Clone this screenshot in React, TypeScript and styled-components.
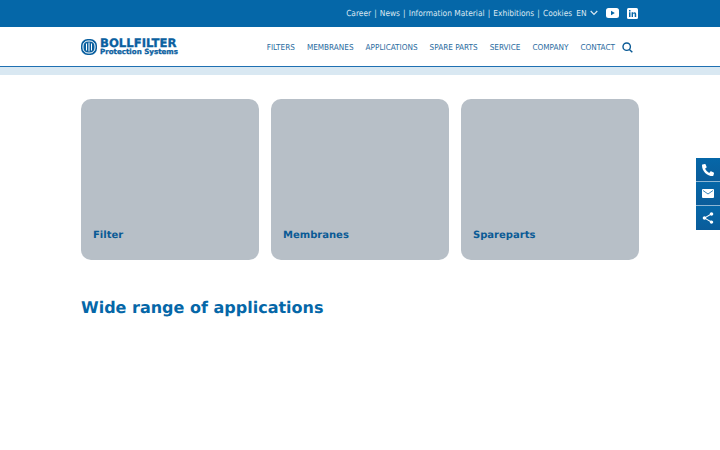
import React from 'react'
import styled, { createGlobalStyle } from 'styled-components'
import { FaPhoneAlt } from 'react-icons/fa'
import { MdShare } from 'react-icons/md'

const GlobalStyle = createGlobalStyle`
    html, body {
        margin: 0;
        padding: 0;
        background: #fff;
        font-family: "DejaVu Sans", sans-serif;
        text-rendering: geometricPrecision;
    }
`

const blue = '#0567a8'

const Page = styled.div`
    position: relative;
    width: 720px;
    height: 450px;
    overflow: hidden;
`

const TopBar = styled.div`
    height: 27px;
    padding-bottom: 1px;
    box-sizing: border-box;
    background: ${blue};
    display: flex;
    align-items: center;
    justify-content: flex-end;
    padding-right: 82px;
    color: #dbe8f2;
    font-family: "DejaVu Sans Condensed", "DejaVu Sans", sans-serif;
    font-stretch: condensed;
    font-size: 8.3px;
`

const TopLink = styled.span`
    white-space: nowrap;
`

const Sep = styled.span`
    margin: 0 3.1px;
`

const Lang = styled.span`
    display: flex;
    align-items: center;
    gap: 3.5px;
    margin-left: 4px;
    margin-right: 8px;
`

const Social = styled.svg`
    display: block;
    margin-left: 8px;
    &:first-of-type {
        margin-left: 0;
    }
`

const NavBar = styled.div`
    height: 39px;
    display: flex;
    align-items: center;
    justify-content: space-between;
    padding: 0 87px 0 81px;
    border-bottom: 1px solid #1f70b2;
`

const Logo = styled.div`
    display: flex;
    align-items: center;
    gap: 3px;
`

const LogoText = styled.div`
    display: flex;
    flex-direction: column;
    padding-top: 1px;
    color: #0a60a0;
    font-weight: 700;
    -webkit-text-stroke: 0.3px #0a60a0;
`

const LogoName = styled.span`
    font-size: 11.7px;
    line-height: 10px;
`

const LogoSub = styled.span`
    font-size: 7.1px;
    line-height: 8px;
`

const Nav = styled.nav`
    display: flex;
    align-items: center;
    padding-top: 1px;
    color: #2c6d9f;
    font-family: "DejaVu Sans Condensed", "DejaVu Sans", sans-serif;
    font-stretch: condensed;
    font-size: 8.13px;
    gap: 12px;
`

const NavLink = styled.span`
    white-space: nowrap;
`

const SearchIcon = styled.svg`
    display: block;
    margin-left: -5px;
`

const Strip = styled.div`
    height: 8px;
    background: #d9e8f2;
`

const Main = styled.main`
    padding: 24px 81px 0;
`

const Cards = styled.div`
    display: grid;
    grid-template-columns: repeat(3, 178px);
    gap: 12px;
`

const Card = styled.div`
    height: 161px;
    background: #b7bfc7;
    border-radius: 10px;
    display: flex;
    align-items: flex-end;
    padding: 0 12px 19.5px;
    box-sizing: border-box;
    color: #0a5a95;
    font-size: 10px;
    font-weight: 700;
`

const Heading = styled.h2`
    margin: 37px 0 0;
    color: ${blue};
    font-size: 16px;
    line-height: 22px;
    font-weight: 700;
`

const SideBar = styled.div`
    position: absolute;
    top: 158px;
    right: 0;
    display: flex;
    flex-direction: column;
`

const SideButton = styled.div`
    width: 24px;
    height: 24px;
    box-sizing: border-box;
    background: linear-gradient(#0567a8, #0a5c9a);
    border-bottom: 1px solid #8db6d4;
    color: #fff;
    display: flex;
    align-items: center;
    justify-content: center;
    &:last-child {
        border-bottom: 0;
    }
`

export default function App() {
    const top = ['Career', 'News', 'Information Material', 'Exhibitions', 'Cookies']
    const nav = ['FILTERS', 'MEMBRANES', 'APPLICATIONS', 'SPARE PARTS', 'SERVICE', 'COMPANY', 'CONTACT']
    return (
        <Page>
            <GlobalStyle />
            <TopBar>
                {top.map((t, i) => (
                    <React.Fragment key={t}>
                        {i > 0 && <Sep>|</Sep>}
                        <TopLink>{t}</TopLink>
                    </React.Fragment>
                ))}
                <Lang>
                    EN
                    <svg width="8" height="6" viewBox="0 0 8 6" fill="none" stroke="#dbe8f2" strokeWidth="1.2">
                        <path d="M.7 1L4 4.300 7.300 1" />
                    </svg>
                </Lang>
                <Social width="13" height="10" viewBox="0 0 13 10">
                    <rect width="13" height="10" rx="2.500" fill="#fff" />
                    <path d="M5 2.800v4.400L8.800 5z" fill={blue} />
                </Social>
                <Social width="11" height="11" viewBox="0 0 11 11">
                    <rect width="11" height="11" rx="1.500" fill="#fff" />
                    <path d="M2 4.300h1.500V9H2zM2 2h1.500v1.400H2zM4.600 4.300H6V5c.4-.5 1-.8 1.600-.8C8.700 4.200 9.200 5 9.200 6.200V9H7.700V6.500c0-.6-.2-1-.8-1s-.9.4-.9 1V9H4.600z" fill={blue} />
                </Social>
            </TopBar>
            <NavBar>
                <Logo>
                    <svg width="16" height="16" viewBox="0 0 16 16">
                        <rect width="16" height="16" rx="6.500" fill="#0a60a0" />
                        <rect x="2" y="2" width="12" height="12" rx="5" fill="none" stroke="#fff" strokeWidth="1" />
                        <path d="M5.500 4.500v7M8 3.500v9M10.500 4.500v7" stroke="#fff" strokeWidth="1" />
                    </svg>
                    <LogoText>
                        <LogoName>BOLLFILTER</LogoName>
                        <LogoSub>Protection Systems</LogoSub>
                    </LogoText>
                </Logo>
                <Nav>
                    {nav.map(n => (
                        <NavLink key={n}>{n}</NavLink>
                    ))}
                    <SearchIcon width="11" height="11" viewBox="0 0 11 11" fill="none" stroke="#0a5a95" strokeWidth="1.400">
                        <circle cx="4.700" cy="4.700" r="3.700" />
                        <path d="M7.400 7.400L10.300 10.300" />
                    </SearchIcon>
                </Nav>
            </NavBar>
            <Strip />
            <Main>
                <Cards>
                    <Card>Filter</Card>
                    <Card>Membranes</Card>
                    <Card>Spareparts</Card>
                </Cards>
                <Heading>Wide range of applications</Heading>
            </Main>
            <SideBar>
                <SideButton>
                    <FaPhoneAlt size={12} />
                </SideButton>
                <SideButton>
                    <svg width="12" height="9" viewBox="0 0 12 9">
                        <rect width="12" height="9" rx="1" fill="#fff" />
                        <path d="M1 1.500l5 3.500 5-3.500" fill="none" stroke={blue} strokeWidth="0.800" />
                    </svg>
                </SideButton>
                <SideButton>
                    <MdShare size={14} />
                </SideButton>
            </SideBar>
        </Page>
    )
}
